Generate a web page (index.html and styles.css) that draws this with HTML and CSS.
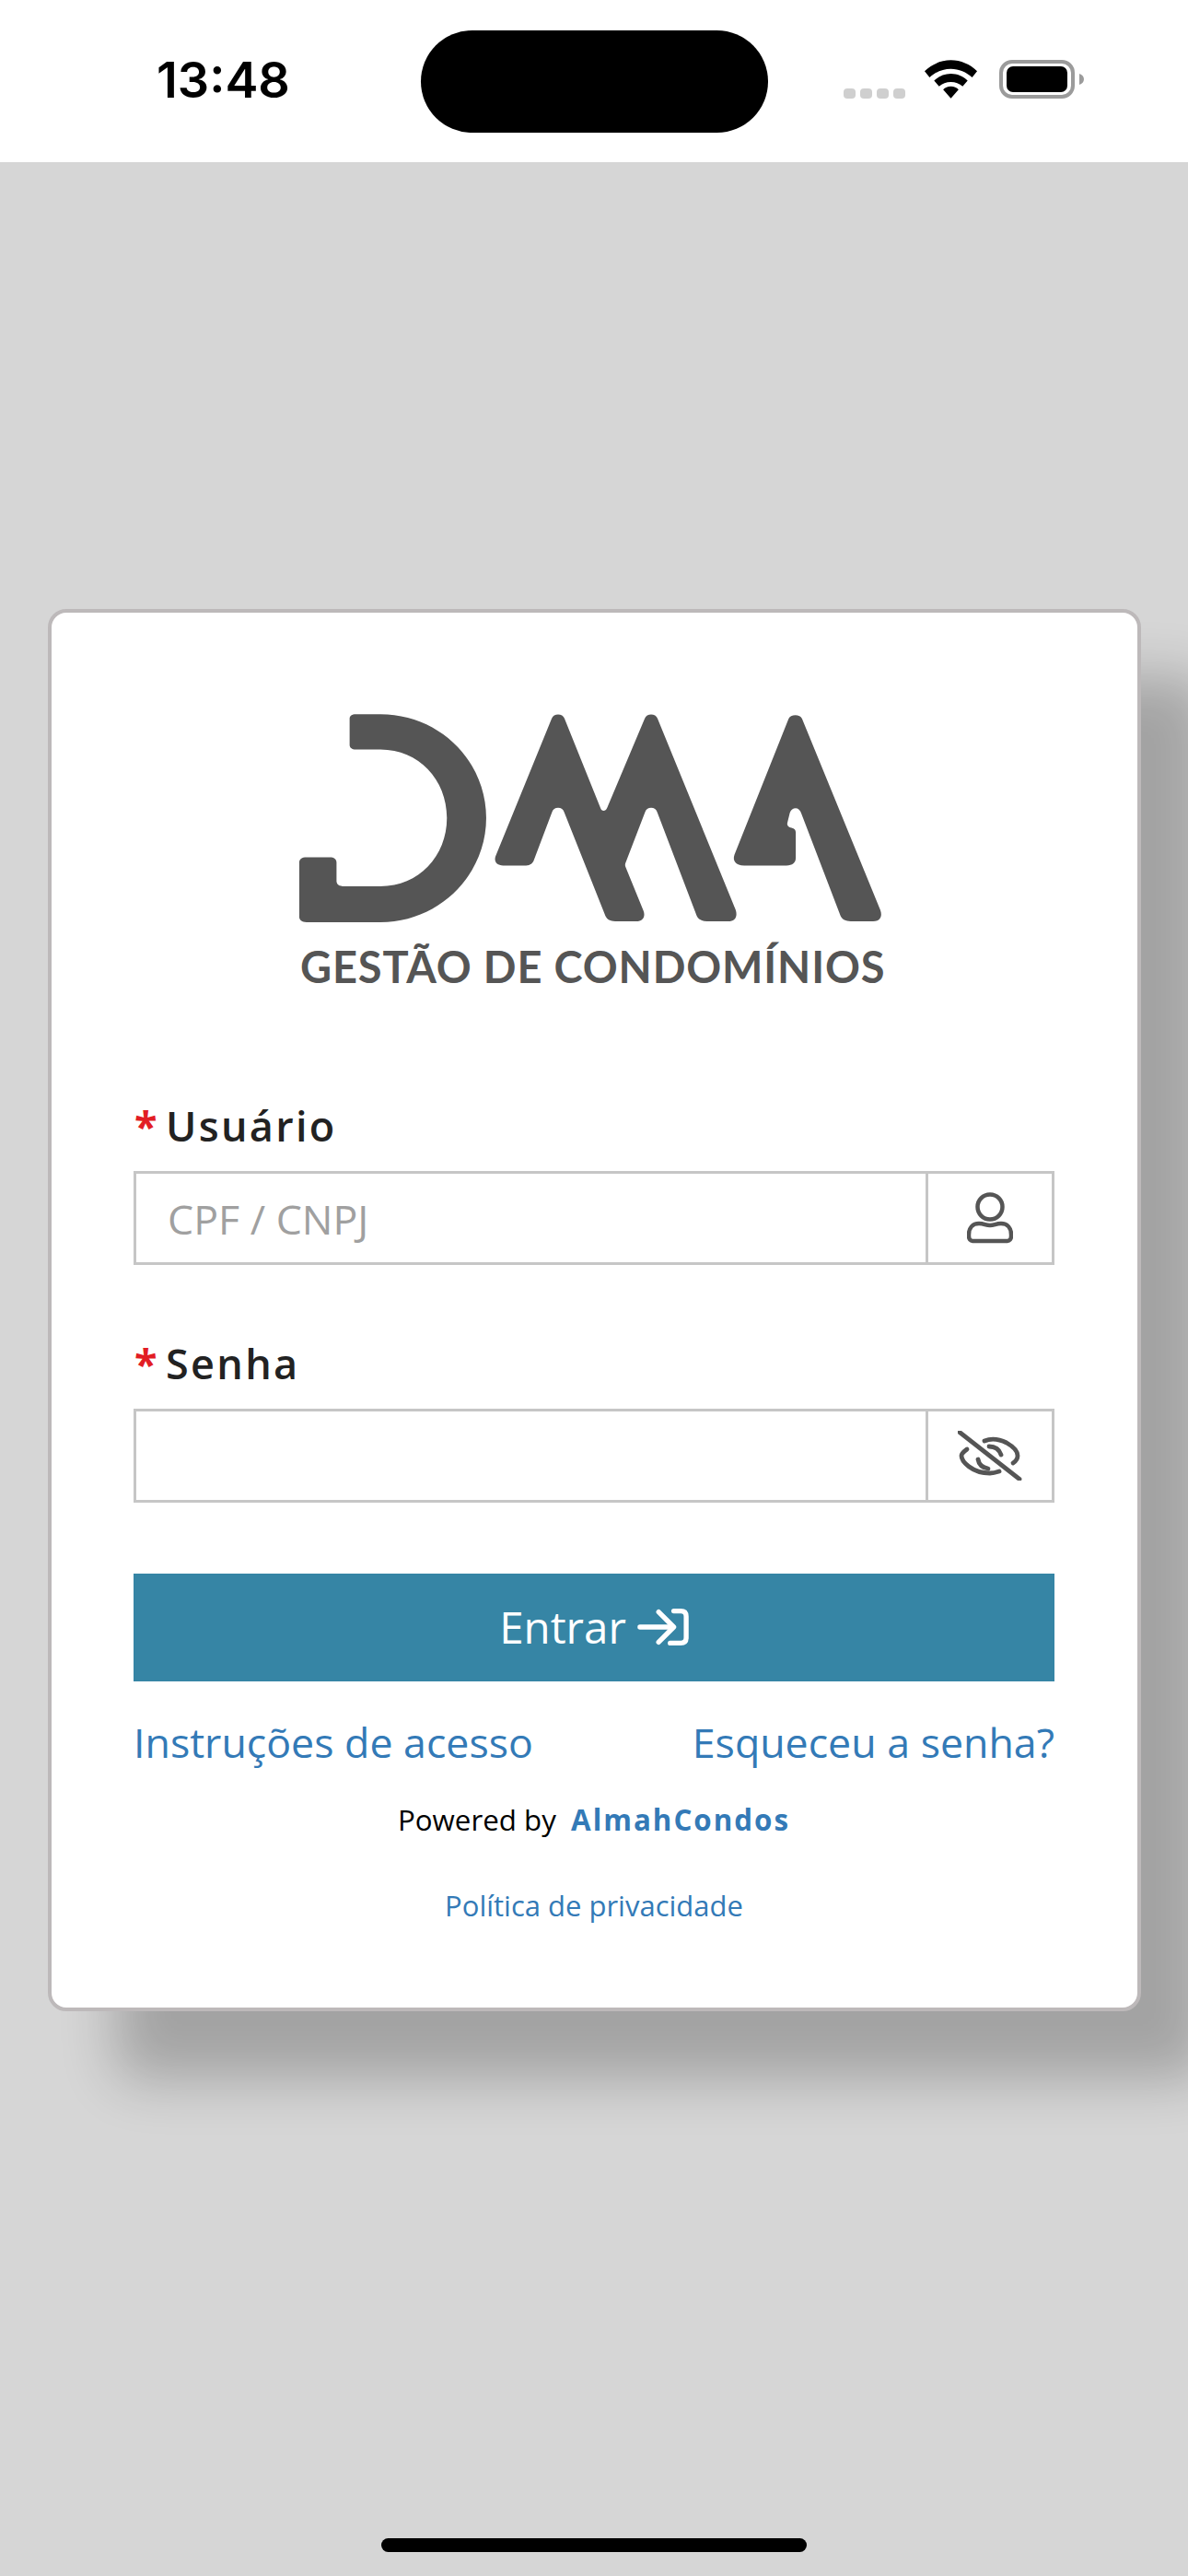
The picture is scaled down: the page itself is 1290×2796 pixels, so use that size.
FILE: index.html
```html
<!DOCTYPE html>
<html lang="pt-BR">
<head>
<meta charset="utf-8">
<title>DMA Gestão de Condomínios</title>
<link rel="stylesheet" href="styles.css">
</head>
<body>
<header class="status-bar">
  <span class="time">13:48</span>
  <span class="island"></span>
  <span class="signal"><i></i><i></i><i></i><i></i></span>
  <svg class="wifi" viewBox="0 0 60 42"><path d="M30 0C41 0 51 4.500 59 12L53.500 19C47 13 39 9.500 30 9.500S13 13 6.500 19L1 12C9 4.500 19 0 30 0Z"/><path d="M30 15C37 15 43.500 17.800 48.500 22.500L43 29C39.500 25.800 35 24 30 24S20.500 25.800 17 29L11.500 22.500C16.500 17.800 23 15 30 15Z"/><path d="M30 29C33.500 29 36.500 30.300 38.500 32.500L30 42L21.500 32.500C23.500 30.300 26.500 29 30 29Z"/></svg>
  <svg class="battery" viewBox="0 0 92 42"><rect x="2" y="2" width="78" height="38" rx="12" fill="none" stroke="#9b9b9b" stroke-width="4"/><rect x="8" y="7" width="66" height="28" rx="7" fill="#000"/><path d="M87 15C90 16 92 18 92 21S90 26 87 27Z" fill="#9b9b9b"/></svg>
</header>

<main class="card">
  <svg class="logo-mark" viewBox="0 100 1568 700" preserveAspectRatio="none">
    <path d="M232 107H290C430 107 540 260 540 445C540 630 430 785 290 785H115C104 785 98 778 98 768V590C98 579 104 573 115 573H170C180 573 186 579 186 590V650C186 662 192 668 205 668H290C380 668 447 570 447 445C447 320 380 222 290 222H232C222 222 217 216 217 207V122C217 112 222 107 232 107Z"/>
    <path d="M562 570L695 120C699 103 721 103 725 120L810 412C813 425 822 425 826 412L915 120C919 103 941 103 945 120L1130 745C1135 768 1128 782 1112 782H1062C1050 782 1042 776 1038 765L945 428C941 406 919 406 915 428L870 590C868 596 868 600 870 606L912 748C917 768 910 782 895 782H845C833 782 826 776 822 765L725 428C721 406 699 406 695 428L652 585C648 596 642 600 630 600H580C565 600 558 588 562 570Z"/>
    <path d="M1127 565L1255 122C1259 106 1283 106 1287 122L1472 745C1478 768 1470 782 1455 782H1402C1390 782 1382 776 1378 765L1285 430C1281 408 1263 408 1258 428L1252 462C1251 470 1256 476 1262 477C1269 479 1272 484 1272 492V575C1272 592 1264 600 1250 600H1150C1130 600 1122 585 1127 565Z"/>
  </svg>
  <div class="logo-text">GESTÃO DE CONDOMÍNIOS</div>

  <form class="form">
    <div class="field">
      <label class="label" for="user"><span class="req">*</span>Usuário</label>
      <div class="input-group">
        <input class="input" id="user" type="text" placeholder="CPF / CNPJ">
        <span class="addon">
          <svg class="icon-user" viewBox="0 0 50 56" fill="none" stroke="#555" stroke-width="4.500"><circle cx="25" cy="16" r="13.500"/><path d="M13 34C19 34 20 36 25 36S31 34 37 34C44 34 48 39 48 46V48C48 51 46 53 44 53H6C4 53 2 51 2 48V46C2 39 6 34 13 34Z"/></svg>
        </span>
      </div>
    </div>
    <div class="field field-second">
      <label class="label" for="pass"><span class="req">*</span>Senha</label>
      <div class="input-group">
        <input class="input" id="pass" type="password">
        <span class="addon">
          <svg class="icon-eye" viewBox="0 0 70 54" fill="none" stroke="#555" stroke-width="4.800" stroke-linecap="round"><path d="M2 1.500L67 52.500"/><path d="M29 11C36 8 45 9 53 13C60 17 65 22 65 27C65 30 63 33 60 35"/><path d="M10 20C6 23 4 25 4 27C4 33 15 46 35 46C39 46 42 45 45 44"/><path d="M34 17C41 17 45 20 47 26"/><path d="M22 31C23 37 27 40 33 41"/></svg>
        </span>
      </div>
    </div>
    <button class="submit" type="button">
      <span>Entrar</span>
      <svg class="icon-enter" viewBox="0 0 58 42" fill="none" stroke="#fff" stroke-width="5.500" stroke-linecap="round" stroke-linejoin="round"><path d="M3 21H39"/><path d="M24 4L41 21L24 38"/><path d="M41 3H49C53 3 55 5 55 9V33C55 37 53 39 49 39H37"/></svg>
    </button>
    <div class="links">
      <a class="link" href="#">Instruções de acesso</a>
      <a class="link" href="#">Esqueceu a senha?</a>
    </div>
    <p class="powered">Powered by <strong class="brand">AlmahCondos</strong></p>
    <p class="privacy"><a href="#">Política de privacidade</a></p>
  </form>
</main>

<div class="home-indicator"></div>
</body>
</html>
```

FILE: styles.css
```css
* { box-sizing: border-box; }
html, body { margin: 0; padding: 0; }
body {
  width: 1290px;
  height: 2796px;
  overflow: hidden;
  background: #d6d6d6;
  font-family: "Open Sans", "Noto Sans", sans-serif;
  display: flex;
  flex-direction: column;
}
.status-bar {
  height: 176px;
  background: #fff;
  display: flex;
  align-items: flex-start;
  padding-left: 170px;
  flex: none;
}
.time {
  width: 287px;
  margin-top: 56px;
  font-family: Inter, sans-serif;
  font-weight: 600;
  font-size: 54px;
  line-height: 62px;
  color: #000;
}
.island {
  width: 377px;
  height: 111px;
  margin-top: 33px;
  border-radius: 56px;
  background: #000;
}
.signal {
  display: flex;
  gap: 5px;
  margin: 96px 0 0 82px;
}
.signal i {
  width: 13px;
  height: 11px;
  border-radius: 4px;
  background: #cfcfcf;
}
.wifi { width: 59px; height: 42px; margin: 65px 0 0 20px; }
.battery { width: 92px; height: 42px; margin: 65px 0 0 23px; }

.card {
  flex: none;
  width: 1187px;
  height: 1522px;
  margin: 485px 0 0 52px;
  padding: 108px 90px 0 89px;
  background: #fff;
  border: 4px solid #bdb9ba;
  border-radius: 20px;
  box-shadow: 74px 74px 60px rgba(0, 0, 0, 0.24);
}
.logo-mark {
  display: block;
  width: 720px;
  height: 233px;
  margin-left: 135px;
  fill: #555;
}
.logo-text {
  margin: 13px 0 0 181px;
  font-family: Lato, sans-serif;
  font-weight: 700;
  font-size: 47px;
  line-height: 60px;
  letter-spacing: 0.85px;
  color: #555;
  white-space: nowrap;
}
.field { margin-top: 112px; }
.field-second { margin-top: 76px; }
.label {
  display: flex;
  align-items: baseline;
  height: 62px;
  font-weight: 600;
  font-size: 45px;
  line-height: 62px;
  letter-spacing: 2.300px;
  color: #222;
  padding-left: 1px;
}
.req {
  width: 34px;
  color: #e21d24;
  font-weight: 700;
}
.input-group {
  display: flex;
  height: 102px;
  margin-top: 18px;
  border: 3px solid #c6c6c6;
}
.input {
  flex: 1;
  min-width: 0;
  border: 0;
  outline: 0;
  padding: 0 0 0 34px;
  background: #fff;
  font-family: inherit;
  font-size: 44.700px;
  color: #555;
}
.input::placeholder { color: #a0a0a0; opacity: 1; }
.addon {
  width: 137px;
  border-left: 3px solid #c6c6c6;
  display: flex;
  align-items: center;
  justify-content: center;
}
.icon-user { width: 50px; height: 56px; }
.icon-eye { width: 70px; height: 54px; }
.submit {
  display: flex;
  align-items: center;
  justify-content: center;
  gap: 12px;
  width: 1000px;
  height: 117px;
  margin-top: 77px;
  border: 0;
  padding: 0 0 2px;
  background: #3685a5;
  color: #fff;
  font-family: inherit;
  font-size: 47.500px;
}
.icon-enter { width: 56px; height: 42px; }
.links {
  display: flex;
  justify-content: space-between;
  margin-top: 35px;
  font-size: 44.700px;
  line-height: 62px;
}
.link, .privacy a { color: #337ab7; text-decoration: none; }
.powered {
  margin: 31px 0 0;
  text-align: center;
  font-size: 31.300px;
  line-height: 44px;
  color: #000;
}
.brand {
  margin-left: 8px;
  color: #337ab7;
  letter-spacing: 2px;
}
.privacy {
  margin: 49px 0 0;
  text-align: center;
  font-size: 31px;
  line-height: 44px;
}
.home-indicator {
  flex: none;
  width: 462px;
  height: 15px;
  margin: 572px 0 0 414px;
  border-radius: 8px;
  background: #000;
}
```
